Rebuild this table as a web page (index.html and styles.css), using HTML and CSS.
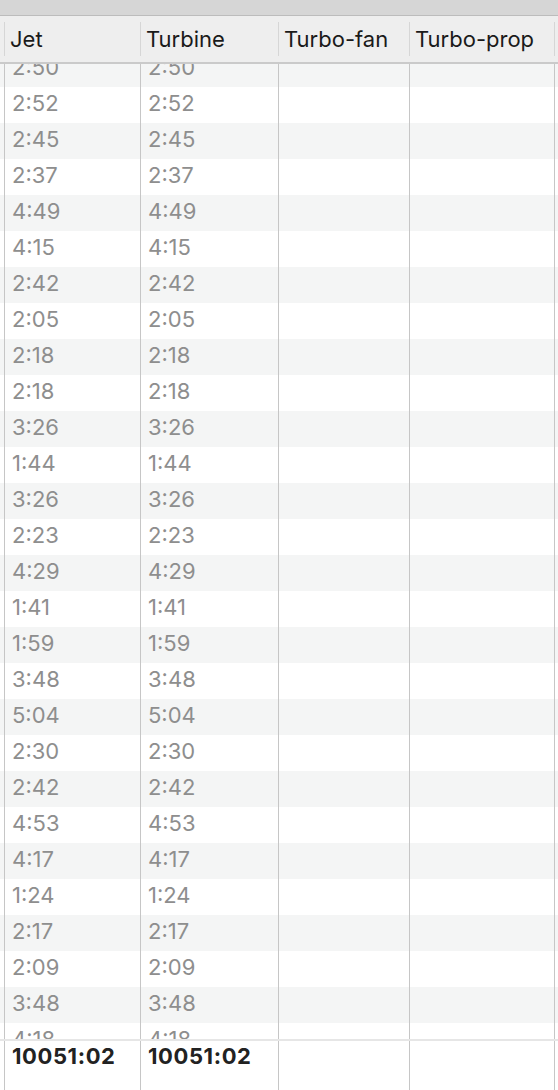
FILE: index.html
```html
<!DOCTYPE html>
<html>
<head>
<meta charset="utf-8">
<link rel="stylesheet" href="styles.css">
</head>
<body>
<div class="window">
  <div class="topbar"></div>
  <div class="header grid">
    <div class="hcell"><span class="hlabel">Jet</span></div>
    <div class="hcell"><span class="hlabel">Turbine</span></div>
    <div class="hcell"><span class="hlabel">Turbo-fan</span></div>
    <div class="hcell"><span class="hlabel">Turbo-prop</span></div>
    <div class="hcell"><span class="hlabel"></span></div>
  </div>
  <div class="body">
    <div class="rows" id="rows">
      <div class="row grid odd"><div class="cell">2:50</div><div class="cell">2:50</div><div class="cell"></div><div class="cell"></div><div class="cell"></div></div>
      <div class="row grid"><div class="cell">2:52</div><div class="cell">2:52</div><div class="cell"></div><div class="cell"></div><div class="cell"></div></div>
      <div class="row grid odd"><div class="cell">2:45</div><div class="cell">2:45</div><div class="cell"></div><div class="cell"></div><div class="cell"></div></div>
      <div class="row grid"><div class="cell">2:37</div><div class="cell">2:37</div><div class="cell"></div><div class="cell"></div><div class="cell"></div></div>
      <div class="row grid odd"><div class="cell">4:49</div><div class="cell">4:49</div><div class="cell"></div><div class="cell"></div><div class="cell"></div></div>
      <div class="row grid"><div class="cell">4:15</div><div class="cell">4:15</div><div class="cell"></div><div class="cell"></div><div class="cell"></div></div>
      <div class="row grid odd"><div class="cell">2:42</div><div class="cell">2:42</div><div class="cell"></div><div class="cell"></div><div class="cell"></div></div>
      <div class="row grid"><div class="cell">2:05</div><div class="cell">2:05</div><div class="cell"></div><div class="cell"></div><div class="cell"></div></div>
      <div class="row grid odd"><div class="cell">2:18</div><div class="cell">2:18</div><div class="cell"></div><div class="cell"></div><div class="cell"></div></div>
      <div class="row grid"><div class="cell">2:18</div><div class="cell">2:18</div><div class="cell"></div><div class="cell"></div><div class="cell"></div></div>
      <div class="row grid odd"><div class="cell">3:26</div><div class="cell">3:26</div><div class="cell"></div><div class="cell"></div><div class="cell"></div></div>
      <div class="row grid"><div class="cell">1:44</div><div class="cell">1:44</div><div class="cell"></div><div class="cell"></div><div class="cell"></div></div>
      <div class="row grid odd"><div class="cell">3:26</div><div class="cell">3:26</div><div class="cell"></div><div class="cell"></div><div class="cell"></div></div>
      <div class="row grid"><div class="cell">2:23</div><div class="cell">2:23</div><div class="cell"></div><div class="cell"></div><div class="cell"></div></div>
      <div class="row grid odd"><div class="cell">4:29</div><div class="cell">4:29</div><div class="cell"></div><div class="cell"></div><div class="cell"></div></div>
      <div class="row grid"><div class="cell">1:41</div><div class="cell">1:41</div><div class="cell"></div><div class="cell"></div><div class="cell"></div></div>
      <div class="row grid odd"><div class="cell">1:59</div><div class="cell">1:59</div><div class="cell"></div><div class="cell"></div><div class="cell"></div></div>
      <div class="row grid"><div class="cell">3:48</div><div class="cell">3:48</div><div class="cell"></div><div class="cell"></div><div class="cell"></div></div>
      <div class="row grid odd"><div class="cell">5:04</div><div class="cell">5:04</div><div class="cell"></div><div class="cell"></div><div class="cell"></div></div>
      <div class="row grid"><div class="cell">2:30</div><div class="cell">2:30</div><div class="cell"></div><div class="cell"></div><div class="cell"></div></div>
      <div class="row grid odd"><div class="cell">2:42</div><div class="cell">2:42</div><div class="cell"></div><div class="cell"></div><div class="cell"></div></div>
      <div class="row grid"><div class="cell">4:53</div><div class="cell">4:53</div><div class="cell"></div><div class="cell"></div><div class="cell"></div></div>
      <div class="row grid odd"><div class="cell">4:17</div><div class="cell">4:17</div><div class="cell"></div><div class="cell"></div><div class="cell"></div></div>
      <div class="row grid"><div class="cell">1:24</div><div class="cell">1:24</div><div class="cell"></div><div class="cell"></div><div class="cell"></div></div>
      <div class="row grid odd"><div class="cell">2:17</div><div class="cell">2:17</div><div class="cell"></div><div class="cell"></div><div class="cell"></div></div>
      <div class="row grid"><div class="cell">2:09</div><div class="cell">2:09</div><div class="cell"></div><div class="cell"></div><div class="cell"></div></div>
      <div class="row grid odd"><div class="cell">3:48</div><div class="cell">3:48</div><div class="cell"></div><div class="cell"></div><div class="cell"></div></div>
      <div class="row grid"><div class="cell">4:18</div><div class="cell">4:18</div><div class="cell"></div><div class="cell"></div><div class="cell"></div></div>
    </div>
  </div>
  <div class="footer grid">
    <div class="fcell">10051:02</div>
    <div class="fcell">10051:02</div>
    <div class="fcell"></div>
    <div class="fcell"></div>
    <div class="fcell"></div>
  </div>
</div>
</body>
</html>
```
FILE: styles.css
```css
html, body {
  margin: 0;
  padding: 0;
  background: #ffffff;
}
.window {
  width: 558px;
  height: 1090px;
  overflow: hidden;
  display: flex;
  flex-direction: column;
  font-family: Inter, "Noto Sans", "Liberation Sans", sans-serif;
}
.topbar {
  height: 15px;
  background: #d6d6d6;
  border-bottom: 1px solid #bcbcbc;
  flex: none;
}
.grid {
  display: grid;
  grid-template-columns: 136px 138px 131px 145px 1fr;
  padding-left: 4px;
}
.header {
  height: 46px;
  background: #eeeeee;
  border-bottom: 2px solid #cacaca;
  flex: none;
}
.hcell {
  display: flex;
  align-items: stretch;
  padding: 6px 0 6px 0;
}
.hlabel {
  display: flex;
  align-items: center;
  flex: 1;
  border-left: 1px solid #d6d6d6;
  padding-left: 5px;
  font-size: 22px;
  color: #1a1a1a;
}
.body {
  flex: none;
  height: 975px;
  overflow: hidden;
}
.rows {
  margin-top: -13px;
}
.row {
  height: 36px;
}
.row.odd {
  background: #f4f5f5;
}
.cell {
  border-left: 1px solid #c6c6c6;
  padding-left: 7px;
  font-size: 22px;
  line-height: 32px;
  color: #8e8e8e;
}
.footer {
  flex: 1;
  border-top: 2px solid #e6e6e6;
}
.fcell {
  border-left: 1px solid #c6c6c6;
  padding-left: 7px;
  padding-top: 2px;
  font-size: 22px;
  line-height: 26px;
  font-weight: 700;
  letter-spacing: 0.6px;
  color: #222222;
}
```
